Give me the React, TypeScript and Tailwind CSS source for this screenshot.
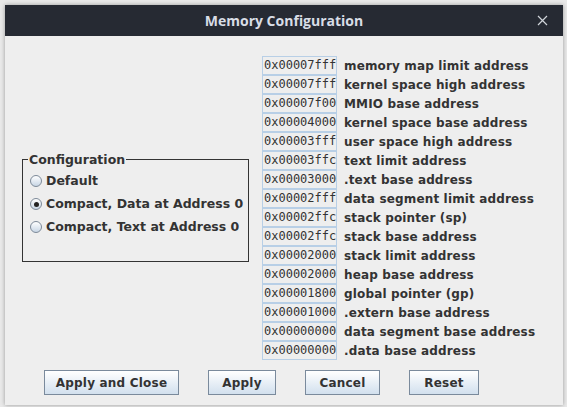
import React from 'react';

const rows: [string, string][] = [
  ['0x00007fff', 'memory map limit address'],
  ['0x00007fff', 'kernel space high address'],
  ['0x00007f00', 'MMIO base address'],
  ['0x00004000', 'kernel space base address'],
  ['0x00003fff', 'user space high address'],
  ['0x00003ffc', 'text limit address'],
  ['0x00003000', '.text base address'],
  ['0x00002fff', 'data segment limit address'],
  ['0x00002ffc', 'stack pointer (sp)'],
  ['0x00002ffc', 'stack base address'],
  ['0x00002000', 'stack limit address'],
  ['0x00002000', 'heap base address'],
  ['0x00001800', 'global pointer (gp)'],
  ['0x00001000', '.extern base address'],
  ['0x00000000', 'data segment base address'],
  ['0x00000000', '.data base address'],
];

const options = ['Default', 'Compact, Data at Address 0', 'Compact, Text at Address 0'];

function Radio({ checked }: { checked?: boolean }) {
  return (
    <span className="w-[12px] h-[12px] rounded-full border border-[#7d8a99] bg-gradient-to-b from-white to-[#c8d6e5] flex items-center justify-center shrink-0">
      {checked && <span className="w-[5px] h-[5px] rounded-full bg-[#222]" />}
    </span>
  );
}

function Button({ label, w }: { label: string; w: string }) {
  return (
    <button
      className={`${w} h-[25px] border border-[#7a8a9c] bg-gradient-to-b from-white to-[#d2e0ee] text-[12px] font-bold text-[#333] tracking-[0.2px]`}
    >
      {label}
    </button>
  );
}

export default function App() {
  return (
    <div
      className="w-[567px] h-[407px] bg-[#e9e9e9] overflow-hidden"
      style={{ fontFamily: '"DejaVu Sans", sans-serif' }}
    >
      <div className="ml-[5px] mt-[5px] w-[558px] h-[400px] flex flex-col shadow-[0_0_4px_rgba(0,0,0,0.35)]">
        {/* Title bar */}
        <div className="h-[31px] bg-[#262a33] flex items-center relative">
          <div
            className="flex-1 text-center text-[14px] font-bold text-[#d8dde6]"
            style={{ fontFamily: '"Open Sans", sans-serif' }}
          >
            Memory Configuration
          </div>
          <svg className="absolute right-[15px] top-[10px]" width="11" height="11" viewBox="0 0 11 11">
            <path d="M1 1L10 10M10 1L1 10" stroke="#d0d4da" strokeWidth="1.2" />
          </svg>
        </div>

        {/* Body */}
        <div className="flex-1 bg-[#eeeeee] flex flex-col">
          <div className="flex pt-[20px]">
            <div className="w-[244px] pl-[17px] flex items-center">
              <fieldset className="w-[227px] h-[110px] border border-[#333] pl-[7px] pr-1 -mt-[2px]">
                <legend className="text-[12.5px] font-bold text-[#333] px-[1px] -ml-[2px] leading-[15px] whitespace-nowrap">
                  Configuration
                </legend>
                <div className="flex flex-col gap-[7px] mt-[6px]">
                  {options.map((o, i) => (
                    <div key={o} className="flex items-center gap-[4px] h-[16px]">
                      <Radio checked={i === 1} />
                      <span className="text-[12.5px] font-bold text-[#333] whitespace-nowrap">{o}</span>
                    </div>
                  ))}
                </div>
              </fieldset>
            </div>
            <div className="flex flex-col ml-[13px]">
              {rows.map(([addr, label], i) => (
                <div key={i} className="flex items-center h-[19px]">
                  <div
                    className="w-[75px] h-[19px] border border-[#b8cfe6] text-[12px] text-[#333] pl-[1px] leading-[17px]"
                    style={{ fontFamily: '"DejaVu Sans Mono", monospace' }}
                  >
                    {addr}
                  </div>
                  <span className="ml-[7px] text-[12px] font-bold text-[#333] tracking-[0.15px] whitespace-nowrap">
                    {label}
                  </span>
                </div>
              ))}
            </div>
          </div>
          <div className="flex pl-[39px] mt-[10px]">
            <Button label="Apply and Close" w="w-[135px]" />
            <div className="w-[29px]" />
            <Button label="Apply" w="w-[68px]" />
            <div className="w-[29px]" />
            <Button label="Cancel" w="w-[75px]" />
            <div className="w-[29px]" />
            <Button label="Reset" w="w-[70px]" />
          </div>
        </div>
      </div>
    </div>
  );
}
